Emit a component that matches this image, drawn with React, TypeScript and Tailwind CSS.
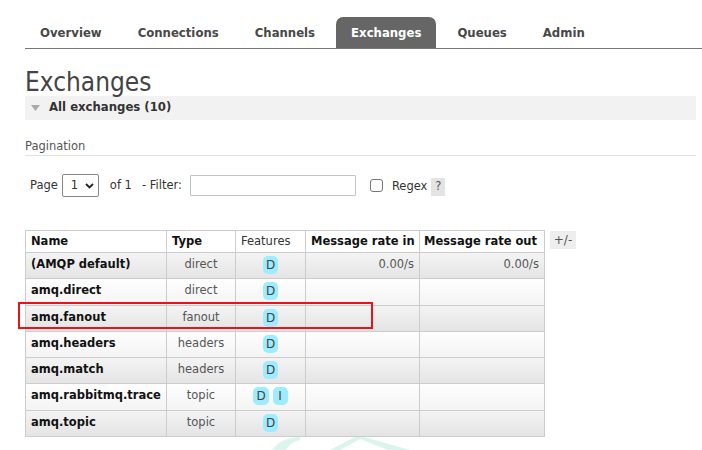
import React from "react";

const tabs = ["Overview", "Connections", "Channels", "Exchanges", "Queues", "Admin"];

type Row = { name: string; type: string; features: string[]; rin?: string; rout?: string };
const rows: Row[] = [
  { name: "(AMQP default)", type: "direct", features: ["D"], rin: "0.00/s", rout: "0.00/s" },
  { name: "amq.direct", type: "direct", features: ["D"] },
  { name: "amq.fanout", type: "fanout", features: ["D"] },
  { name: "amq.headers", type: "headers", features: ["D"] },
  { name: "amq.match", type: "headers", features: ["D"] },
  { name: "amq.rabbitmq.trace", type: "topic", features: ["D", "I"] },
  { name: "amq.topic", type: "topic", features: ["D"] },
];

function Badge({ t }: { t: string }) {
  return (
    <span className="inline-flex items-center justify-center h-[18px] min-w-[15px] px-[3px] rounded-[5px] bg-[#9eecff] text-[#444] text-[12px] leading-none">
      {t}
    </span>
  );
}

export default function App() {
  return (
    <div className="relative w-[702px] h-[450px] overflow-hidden bg-white font-['DejaVu_Sans',sans-serif] text-[#333]">
      {/* nav */}
      <div className="ml-[25px] pt-[17px] flex gap-[6px] border-b border-[#777]">
        {tabs.map((t) => (
          <div
            key={t}
            className={
              "h-[31px] px-[15px] flex items-center font-['DejaVu_Sans_Condensed',sans-serif] font-bold text-[13px] " +
              (t === "Exchanges" ? "bg-[#666] text-white rounded-t-[7px]" : "text-[#484848]")
            }
          >
            {t}
          </div>
        ))}
      </div>

      <div className="ml-[25px] mr-[6px]">
        <h1 className="mt-[18px] h-[29px] leading-[30px] font-['DejaVu_Sans_Condensed',sans-serif] text-[26px] text-[#444]">
          Exchanges
        </h1>
        <div className="h-[24px] bg-[#f2f2f2] flex items-center">
          <svg width="9" height="6" viewBox="0 0 9 6" className="ml-[6px]">
            <polygon points="0,0 9,0 4.5,6" fill="#aaa" />
          </svg>
          <span className="ml-[9px] font-bold text-[11.7px] text-[#333]">All exchanges (10)</span>
        </div>

        <div className="mt-[19px] pb-[2px] border-b border-[#e2e2e2] text-[11.5px] text-[#555] leading-[14px]">
          Pagination
        </div>

        <div className="mt-[18px] h-[23px] pl-[5px] flex items-center text-[11.5px] text-[#333]">
          <span>Page</span>
          <div className="ml-[4px] w-[37px] h-[23px] border border-[#888] rounded-[2px] flex items-center pl-[8px] gap-[7px]">
            <span>1</span>
            <svg width="9" height="6" viewBox="0 0 9 6">
              <polyline points="1,1 4.5,4.5 8,1" fill="none" stroke="#222" strokeWidth="1.8" />
            </svg>
          </div>
          <span className="ml-[11px]">of 1</span>
          <span className="ml-[10px]">- Filter:</span>
          <div className="ml-[8px] w-[166px] h-[21px] border border-[#c4c4c4] rounded-[1px]" />
          <div className="ml-[14px] w-[13px] h-[13px] border border-[#767676] rounded-[3px]" />
          <span className="ml-[9px] mt-[3px]">Regex</span>
          <span className="ml-[4px] mt-[2px] w-[14px] h-[18px] bg-[#e4e4e4] flex items-center justify-center text-[#555]">
            ?
          </span>
        </div>

        <div className="mt-[33px] flex items-start">
          <table className="table-fixed w-[519px] border-collapse text-[11.5px] whitespace-nowrap">
            <colgroup>
              <col className="w-[141px]" />
              <col className="w-[69px]" />
              <col className="w-[70px]" />
              <col className="w-[114px]" />
              <col className="w-[125px]" />
            </colgroup>
            <thead>
              <tr className="h-[22px] bg-white">
                <th className="border border-[#ccc] px-[5px] text-left font-bold text-[#111]">Name</th>
                <th className="border border-[#ccc] px-[5px] text-left font-bold text-[#111]">Type</th>
                <th className="border border-[#ccc] px-[5px] text-left font-normal text-[#333]">Features</th>
                <th className="border border-[#ccc] px-[5px] text-left font-bold text-[#111]">Message rate in</th>
                <th className="border border-[#ccc] px-[4px] text-left font-bold text-[#111]">Message rate out</th>
              </tr>
            </thead>
            <tbody>
              {rows.map((r, i) => (
                <tr
                  key={r.name}
                  className={
                    "h-[26.3px] " +
                    (i % 2 === 0
                      ? "bg-gradient-to-b from-[#f4f4f4] to-[#e4e4e4]"
                      : "bg-gradient-to-b from-[#fefefe] to-[#f4f4f4]")
                  }
                >
                  <td className="border border-[#ccc] px-[5px] align-top pt-[3px] font-bold text-[#111]">{r.name}</td>
                  <td className="border border-[#ccc] px-[4px] align-top pt-[3px] text-center text-[#555]">{r.type}</td>
                  <td className="border border-[#ccc] px-[4px] align-top pt-[3px] text-center">
                    <div className="flex justify-center gap-[4px]">
                      {r.features.map((f) => (
                        <Badge key={f} t={f} />
                      ))}
                    </div>
                  </td>
                  <td className="border border-[#ccc] px-[5px] align-top pt-[3px] text-right text-[#555]">{r.rin ?? ""}</td>
                  <td className="border border-[#ccc] px-[5px] align-top pt-[3px] text-right text-[#555]">{r.rout ?? ""}</td>
                </tr>
              ))}
            </tbody>
          </table>
          <div className="ml-[5px] mt-[1px] w-[26px] h-[18px] bg-[#eee] flex items-center justify-center text-[12px] text-[#555]">
            +/-
          </div>
        </div>
      </div>

      {/* highlight */}
      <div className="absolute left-[18px] top-[302px] w-[355px] h-[27px] border-2 border-[#e8141a]" />

      {/* watermark */}
      <svg className="absolute left-[260px] top-[430px]" width="160" height="20" viewBox="0 0 160 20">
        <path d="M40,7 C28,7 18,12 12,20 L26,20 C30,14 34,11 40,10 Z" fill="#dcf4ee" />
        <polygon points="70,20 95,7 104,7 80,20" fill="#dcf4ee" />
        <polygon points="95,7 104,7 150,20 128,20" fill="#dcf4ee" />
      </svg>
    </div>
  );
}
